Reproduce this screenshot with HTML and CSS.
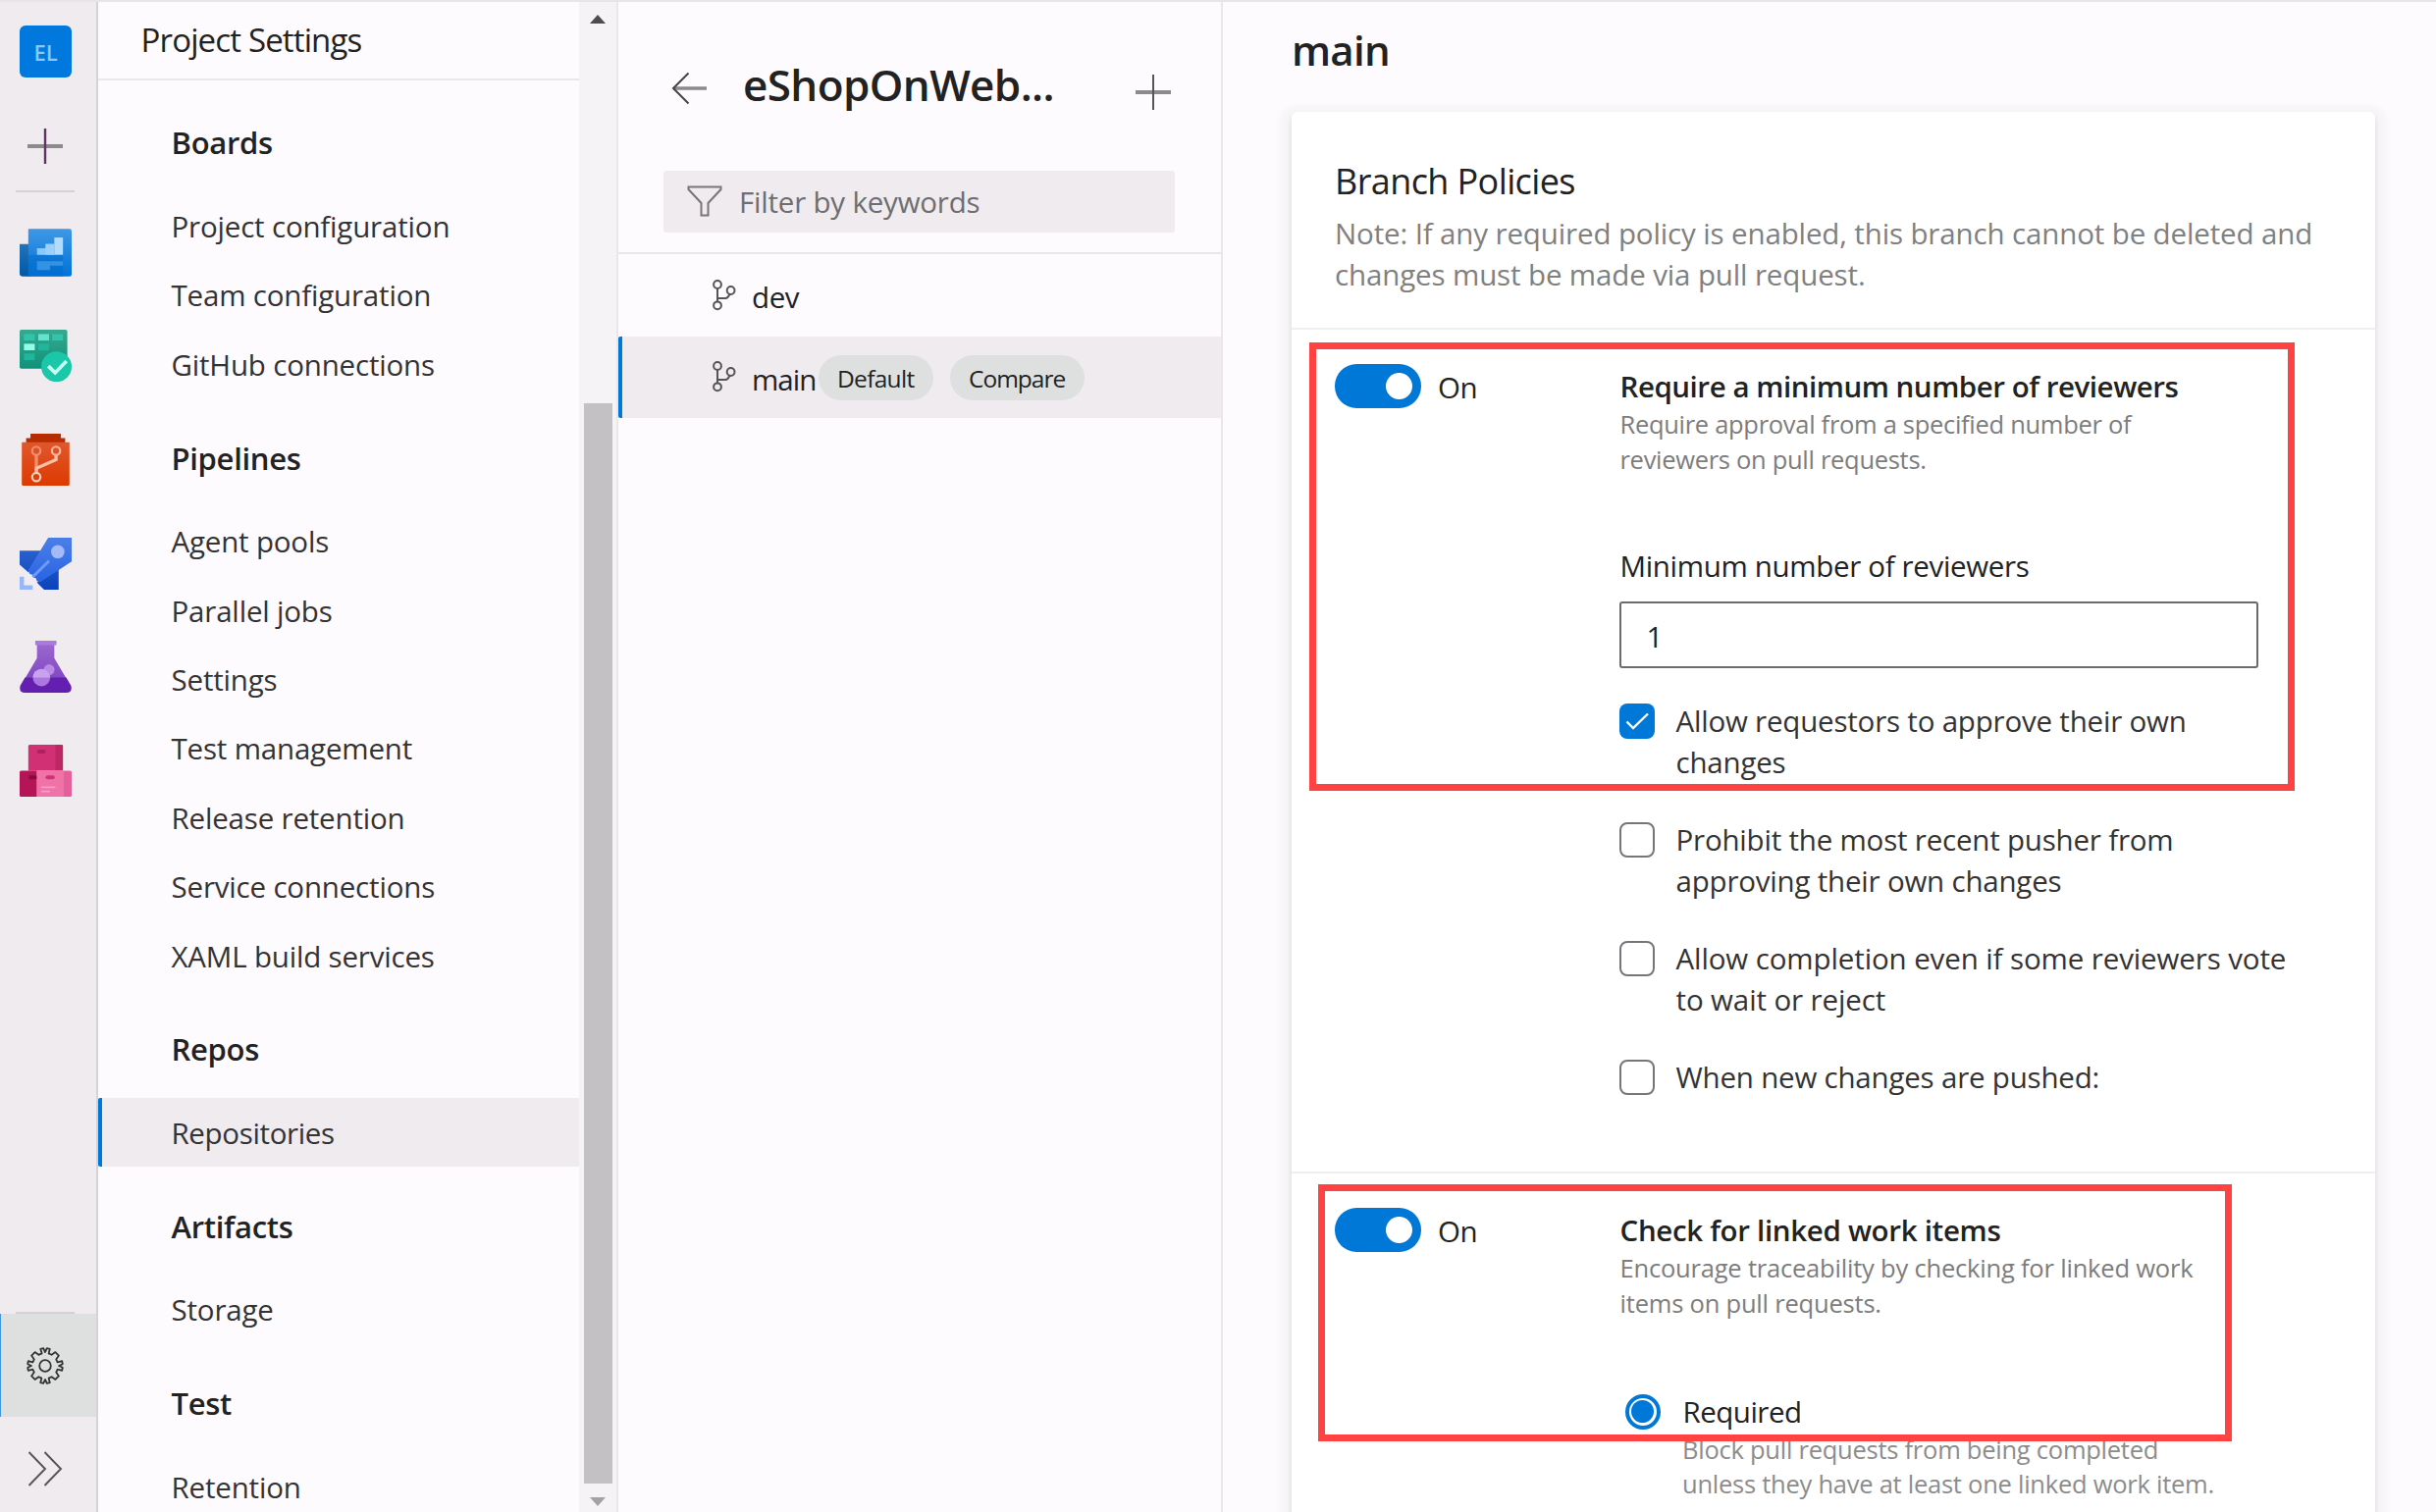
FILE: index.html
```html
<!DOCTYPE html>
<html lang="en">
<head>
<meta charset="utf-8">
<title>Project Settings - Repositories</title>
<link rel="stylesheet" href="styles.css">
</head>
<body>
<svg class="defs" width="0" height="0" aria-hidden="true">
  <defs>
    <linearGradient id="g-blue" x1="0" y1="0" x2="0" y2="1"><stop offset="0" stop-color="#3f98e6"/><stop offset="1" stop-color="#0072d8"/></linearGradient>
    <linearGradient id="g-navy" x1="0" y1="0" x2="0" y2="1"><stop offset="0" stop-color="#2373b8"/><stop offset="1" stop-color="#0058a5"/></linearGradient>
    <linearGradient id="g-green" x1="0" y1="0" x2="0" y2="1"><stop offset="0" stop-color="#37a98e"/><stop offset="1" stop-color="#0f927a"/></linearGradient>
    <linearGradient id="g-orange" x1="0" y1="0" x2="0" y2="1"><stop offset="0" stop-color="#e0572c"/><stop offset="1" stop-color="#dd3a00"/></linearGradient>
    <linearGradient id="g-rocket" x1="0" y1="0" x2="0" y2="1"><stop offset="0" stop-color="#4a7fe8"/><stop offset="1" stop-color="#2a63e4"/></linearGradient>
    <linearGradient id="g-fin" x1="0" y1="0" x2="0" y2="1"><stop offset="0" stop-color="#2a60cc"/><stop offset="1" stop-color="#0a43bc"/></linearGradient>
    <linearGradient id="g-flask" x1="0" y1="0" x2="0" y2="1"><stop offset="0" stop-color="#9d68d0"/><stop offset="1" stop-color="#8148c2"/></linearGradient>
    <symbol id="branch" viewBox="0 0 24 32">
      <g fill="none" stroke="#555" stroke-width="2">
        <circle cx="5" cy="5" r="3.9"/><circle cx="5" cy="26.3" r="3.9"/><circle cx="18.6" cy="11" r="3.9"/>
        <path d="M5 9v13.4M5 19h8.5q2.5-.5 4-4.3"/>
      </g>
    </symbol>
  </defs>
</svg>
<div class="app">
  <nav class="rail">
    <div class="rail-item"><span class="avatar">EL</span></div>
    <div class="rail-item rail-add"><svg width="38" height="38" viewBox="0 0 38 38"><path d="M1 19h36" stroke="#8d898c" stroke-width="4"/><path d="M19 1v36" stroke="#5e3560" stroke-width="2.4"/></svg></div>
    <div class="rail-sep"></div>
    <div class="rail-item"><svg class="hub" viewBox="0 0 24 24"><path fill="url(#g-navy)" d="M0 8h5v15H1.5Q0 23 0 21.5z"/><path fill="url(#g-blue)" d="M4 1h19q1 0 1 1v20q0 1-1 1H4z"/><path fill="#0068c8" opacity=".45" d="M4 13h16v10H4z"/><path fill="#8cc8f8" d="M8 10h4V8h4v5H8z"/><path fill="#b3dbfb" d="M16 5h4v8h-4z"/><path fill="#9cd0fa" d="M12 8h4v5h-4z"/><path fill="#3492e4" d="M8 16h12v2h-6v2H8z"/></svg></div>
    <div class="rail-item"><svg class="hub" viewBox="0 0 24 24"><rect width="22" height="18" rx=".8" fill="url(#g-green)"/><path fill="#32c4ab" d="M2 2h5v3H2zM15 2h5v3h-5z"/><path fill="#62e3cd" d="M8.6 2h5v3h-5z"/><path fill="#94ffe8" d="M2 6.5h5v3H2z"/><path fill="#21b69c" d="M8.6 6.5h5v3h-5zM2 11h5v3H2z"/><circle cx="17" cy="17.1" r="7" fill="#1bc7a9"/><path fill="none" stroke="#c4fff1" stroke-width="1.7" d="M13.2 16.8l3.2 3.1 5.2-5.4"/></svg></div>
    <div class="rail-item"><svg class="hub" viewBox="0 0 24 24"><path fill="#b72c00" d="M5 0h14v2h2v3H3V2h2z"/><path fill="url(#g-orange)" d="M1 4h22v19.300q0 .7-.7.7H1.700Q1 24 1 23.300z"/><g fill="none" stroke="#f9ab92"><circle cx="7.700" cy="7.900" r="1.900" stroke-width="1" stroke="#f08f70"/><path stroke="#f08f70" stroke-width="1.500" d="M7.700 10v7"/><path stroke="#ffc0a8" stroke-width="1.500" d="M16.800 10v2l-9.100 4v2"/><circle cx="16.800" cy="7.900" r="1.900" stroke="#ffb59d" stroke-width="1"/><circle cx="7.700" cy="20" r="1.900" stroke="#ffd0bf" stroke-width="1"/></g></svg></div>
    <div class="rail-item"><svg class="hub" viewBox="0 0 24 24"><path fill="url(#g-fin)" d="M0 6h10L4 16 0 12.500zM18 13v11h-6.700L8 20.700z"/><path fill="url(#g-rocket)" d="M13.200 0H24v11L9.500 20.500 8 20l-.5-1.300-1-.2-.3-1.300-1.500-.4-.8-1.600z"/><circle cx="17.600" cy="6.500" r="3.100" fill="#a2baf7"/><path stroke="#6d9bf8" stroke-width="1.300" d="M13.600 10.700l-7.600 7.400"/><path fill="#98b7fb" d="M0 18h2v4h4v2H0z"/></svg></div>
    <div class="rail-item"><svg class="hub" viewBox="0 0 24 24"><path fill="url(#g-flask)" d="M8 1h8v7l5.600 9.500H2.400L8 8z"/><path fill="#a97bdb" d="M7.200 0h9.800v2H7.200z"/><path fill="#6320b0" d="M2.500 17h19l2.200 3.700Q24.500 24 21.500 24h-19Q-.5 24 .3 20.700z"/><circle cx="13.600" cy="13.400" r="2.500" fill="#b78be6"/><circle cx="10.100" cy="17" r="4" fill="#ac78e0"/><path fill="#c7a2ef" d="M6.100 17a4 4 0 0 1 8 0z"/></svg></div>
    <div class="rail-item"><svg class="hub" viewBox="0 0 24 24"><path fill="#d13174" d="M4.500 0H17v12H4V.5z"/><path fill="#bc2864" d="M16.500 0h3q.5 0 .5.500V12h-3.500z"/><rect x="8" y="2.300" width="4" height="1.800" rx=".9" fill="#ae2260"/><path fill="#b31556" d="M.7 12H8v12H.7q-.7 0-.7-.7V12.700Q0 12 .7 12z"/><rect x="4.200" y="14.200" width="3.800" height="1.800" rx=".8" fill="#860c3e"/><path fill="#f073a8" d="M8 12h12v12H8z"/><path fill="#e75f9a" d="M20 12h3.300q.7 0 .7.700v10.600q0 .7-.7.700H20z"/><rect x="12" y="14.200" width="4.200" height="1.800" rx=".9" fill="#d03277"/><path stroke="#fa9cc4" stroke-width=".8" d="M10 19.600h6.500M10 21.600h4"/></svg></div>
    <div class="rail-sep rail-sep-end"></div>
    <div class="rail-item rail-active"><svg width="38" height="38" viewBox="-19 -19 38 38"><path fill="none" stroke="#333" stroke-width="1.800" stroke-linejoin="round" d="M-3.300-12.600L-4.800-17.200-1.800-17.800 0-14 1.800-17.800 4.800-17.200 3.600-12.600 6.600-11.200 10.400-13.900 13.900-10.400 11.200-6.600 12.600-3.600 17.200-4.800 17.800-1.800 14 0 17.800 1.800 17.200 4.800 12.600 3.600 11.200 6.600 13.900 10.400 10.400 13.900 6.600 11.200 3.600 12.600 4.800 17.200 1.800 17.800 0 14-1.800 17.800-4.800 17.200-3.600 12.600-6.600 11.200-10.400 13.900-13.900 10.400-11.200 6.600-12.600 3.600-17.200 4.800-17.800 1.800-14 0-17.800-1.800-17.200-4.800-12.600-3.600-11.200-6.600-13.900-10.400-10.400-13.900-6.600-11.200z"/><circle r="5.800" fill="none" stroke="#333" stroke-width="1.800"/></svg></div>
    <div class="rail-item"><svg width="36" height="38" viewBox="0 0 36 38"><path fill="none" stroke="#555" stroke-width="1.900" d="M1.500 2L18 19 1.500 36M17.500 2L34 19 17.500 36"/></svg></div>
  </nav>

  <aside class="settings">
    <div class="settings-body">
      <h1 class="settings-title">Project Settings</h1>
      <h2>Boards</h2>
      <ul><li>Project configuration</li><li>Team configuration</li><li>GitHub connections</li></ul>
      <h2>Pipelines</h2>
      <ul><li>Agent pools</li><li>Parallel jobs</li><li>Settings</li><li>Test management</li><li>Release retention</li><li>Service connections</li><li>XAML build services</li></ul>
      <h2>Repos</h2>
      <ul><li class="selected">Repositories</li></ul>
      <h2>Artifacts</h2>
      <ul><li>Storage</li></ul>
      <h2>Test</h2>
      <ul><li>Retention</li></ul>
    </div>
    <div class="scrollbar"><span class="arrow-up"></span><span class="thumb"></span><span class="arrow-down"></span></div>
  </aside>

  <section class="branches">
    <header class="repo-head">
      <svg class="back" width="36" height="34" viewBox="0 0 36 34"><path stroke="#8d898c" stroke-width="3.600" d="M2 17h34"/><path fill="none" stroke="#444" stroke-width="2" d="M17.500 1.500L2 17l15.500 15.500"/></svg>
      <h2>eShopOnWeb...</h2>
      <svg class="plus" width="36" height="36" viewBox="0 0 36 36"><path stroke="#8d898c" stroke-width="3.800" d="M0 18h36"/><path stroke="#555" stroke-width="2" d="M18 0v36"/></svg>
    </header>
    <div class="filter">
      <svg width="36" height="32" viewBox="0 0 36 32"><path fill="none" stroke="#7b7479" stroke-width="2" d="M1.500 1.500h33v2.500L21.500 18v12.500h-7V18L1.500 4z"/></svg>
      <span>Filter by keywords</span>
    </div>
    <div class="branch-list">
      <div class="branch"><svg><use href="#branch"/></svg><span class="name">dev</span></div>
      <div class="branch current"><svg><use href="#branch"/></svg><span class="name">main</span><span class="pill pill-default">Default</span><span class="pill pill-compare">Compare</span></div>
    </div>
  </section>

  <main class="content">
    <h2 class="content-title">main</h2>
    <div class="card">
      <header class="card-head">
        <h3>Branch Policies</h3>
        <p>Note: If any required policy is enabled, this branch cannot be deleted and<br>changes must be made via pull request.</p>
      </header>
      <section class="policy">
        <div class="switch"><span class="toggle"></span><span class="state">On</span></div>
        <div class="detail">
          <h4 class="title-wide">Require a minimum number of reviewers</h4>
          <p class="desc desc-tight">Require approval from a specified number of<br>reviewers on pull requests.</p>
          <label class="field-label">Minimum number of reviewers</label>
          <div class="input">1</div>
          <div class="options">
            <div class="option"><span class="check checked"><svg width="36" height="36" viewBox="0 0 36 36"><path fill="none" stroke="#fff" stroke-width="2.400" d="M7.500 18.500l6.500 6.500L29 10.500"/></svg></span><span>Allow requestors to approve their own<br>changes</span></div>
            <div class="option"><span class="check"></span><span>Prohibit the most recent pusher from<br>approving their own changes</span></div>
            <div class="option option-long"><span class="check"></span><span>Allow completion even if some reviewers vote<br>to wait or reject</span></div>
            <div class="option"><span class="check"></span><span>When new changes are pushed:</span></div>
          </div>
        </div>
      </section>
      <section class="policy">
        <div class="switch"><span class="toggle"></span><span class="state">On</span></div>
        <div class="detail">
          <h4>Check for linked work items</h4>
          <p class="desc">Encourage traceability by checking for linked work<br>items on pull requests.</p>
          <div class="radio-row"><span class="radio"></span><span>Required</span></div>
          <p class="desc radio-desc">Block pull requests from being completed<br>unless they have at least one linked work item.</p>
        </div>
      </section>
    </div>
  </main>
</div>
<div class="highlight highlight-reviewers"></div>
<div class="highlight highlight-items"></div>
</body>
</html>
```
FILE: styles.css
```css
* { box-sizing: border-box; }
body {
  margin: 0;
  position: relative;
  width: 2482px;
  height: 1541px;
  overflow: hidden;
  background: #fefbff;
  color: #222;
  font-family: "Open Sans", "Liberation Sans", sans-serif;
  font-size: 29.5px;
  letter-spacing: -0.1px;
  white-space: nowrap;
}
h1, h2, h3, h4, p, ul { margin: 0; padding: 0; font-weight: 400; }
ul { list-style: none; }
svg { display: block; flex: none; }
.defs { position: absolute; }

.app {
  display: flex;
  height: 1541px;
  overflow: hidden;
  border-top: 2px solid #e6e5e8;
}

/* Hub rail */
.rail {
  flex: none;
  width: 99.5px;
  height: 1548px;
  background: #efebee;
  border-right: 2px solid #d5d3d7;
  display: flex;
  flex-direction: column;
}
.rail-item {
  flex: none;
  height: 105.6px;
  padding-left: 20px;
  display: flex;
  align-items: center;
}
.rail-item:first-child { height: 101.5px; }
.avatar {
  width: 53px;
  height: 53px;
  border-radius: 6px;
  background: #0078de;
  color: #8ec6f5;
  font-size: 22px;
  font-weight: 600;
  line-height: 54px;
  text-align: center;
}
.rail-add { height: 90px; padding-left: 27px; }
.rail-sep { flex: none; width: 60px; height: 2px; margin: 0 0 9px 16px; background: #d4d2d5; }
.rail-sep-end { margin: auto 0 0 16px; }
.hub { width: 53px; height: 53px; }
.rail-active { background: #dee0df; border-left: 1px solid #3f98e0; padding-left: 26px; }
.rail-active + .rail-item { padding-left: 28px; }

/* Project settings list */
.settings { flex: none; width: 530.5px; display: flex; border-right: 2px solid #e8e7ea; }
.settings-body { flex: none; width: 490.5px; }
.settings-title {
  height: 79.5px;
  padding-left: 44px;
  border-bottom: 2px solid #e8e7ea;
  font-size: 33px;
  line-height: 77px;
  letter-spacing: -0.85px;
}
.settings h2 {
  height: 110px;
  padding: 40.5px 0 0 75px;
  font-size: 31px;
  font-weight: 600;
  line-height: 40px;
  letter-spacing: -0.3px;
}
.settings-title + h2 { height: 113.5px; padding-top: 43.5px; }
.settings li {
  height: 70.4px;
  padding-left: 75px;
  line-height: 72px;
  letter-spacing: -0.18px;
  color: #333;
}
.settings li.selected {
  background: #efebee;
  border-left: 4px solid #0078d7;
  border-radius: 2px 0 0 2px;
  padding-left: 71px;
  letter-spacing: -0.35px;
}
.scrollbar {
  width: 38px;
  background: #f6f3f6;
  display: flex;
  flex-direction: column;
  align-items: center;
  padding-top: 13px;
}
.arrow-up, .arrow-down { border: 8px solid transparent; border-top-width: 0; }
.arrow-up { border-bottom: 9px solid #4d4c4f; }
.arrow-down { border-top: 9px solid #a3a1a4; border-bottom-width: 0; margin-top: 13.5px; }
.thumb { width: 29px; height: 1101px; margin-top: 387px; background: #c3c1c4; }

/* Branch list */
.branches { flex: none; width: 615.5px; border-right: 2px solid #e8e7ea; }
.repo-head { display: flex; height: 171.5px; padding: 57px 51px 0 54px; }
.repo-head .back { margin-top: 13.5px; }
.repo-head h2 {
  flex: 1;
  margin-left: 37px;
  font-size: 44px;
  font-weight: 600;
  line-height: 54px;
  letter-spacing: -0.6px;
}
.repo-head .plus { margin-top: 17px; }
.filter {
  display: flex;
  align-items: center;
  gap: 17px;
  width: 521px;
  height: 63.5px;
  margin-left: 46px;
  padding-left: 24px;
  border-radius: 3px;
  background: #efebee;
  color: #6f6d70;
  line-height: 40px;
  letter-spacing: -0.2px;
}
.filter span { padding-top: 2px; }
.branch-list { margin-top: 20px; border-top: 2px solid #e8e7ea; }
.branch { display: flex; align-items: center; height: 83.5px; padding-left: 96px; }
.branch svg { width: 24px; height: 32px; }
.branch .name { margin-left: 16px; padding-top: 4px; letter-spacing: -0.4px; }
.branch.current {
  background: #efebee;
  border-left: 4px solid #0078d7;
  border-radius: 2px 0 0 2px;
  padding-left: 92px;
}
.branch.current .name { width: 68px; letter-spacing: -1px; }
.pill {
  height: 46px;
  margin-top: 2px;
  padding-left: 19px;
  border-radius: 23px;
  background: #dee0df;
  font-size: 24.5px;
  line-height: 47px;
  letter-spacing: -0.7px;
}
.pill-default { width: 117px; }
.pill-compare { width: 137px; margin-left: 17px; letter-spacing: -1px; }

/* Branch policies */
.content { padding-left: 70.5px; }
.content-title {
  height: 112px;
  padding-top: 19px;
  font-size: 42px;
  font-weight: 600;
  line-height: 60px;
  letter-spacing: -0.7px;
}
.card {
  width: 1104px;
  height: 1500px;
  border-radius: 6px;
  background: #fff;
  box-shadow: 0 4px 6px rgba(0, 0, 0, .13), 0 6px 4px 13px rgba(0, 0, 0, .022);
}
.card-head { height: 221.5px; padding: 48.5px 0 0 44px; border-bottom: 2px solid #efeef0; }
.card-head h3 { font-size: 36px; line-height: 44px; letter-spacing: -0.6px; }
.card-head p { margin-top: 10px; line-height: 42px; letter-spacing: -0.13px; color: #808080; }
.policy {
  display: flex;
  height: 860.2px;
  padding: 35.8px 0 0 44px;
  border-bottom: 2px solid #efeef0;
}
.switch { flex: none; display: flex; width: 290.5px; }
.toggle {
  width: 88px;
  height: 44.5px;
  border-radius: 22.25px;
  background: #0078d7;
  padding: 9px 9px 0 52px;
}
.toggle::after { content: ""; display: block; width: 27px; height: 27px; border-radius: 50%; background: #fff; }
.state { margin-left: 17px; height: 46px; line-height: 48px; letter-spacing: -0.4px; }
.detail h4 {
  margin-top: 2.5px;
  font-weight: 600;
  line-height: 40px;
  letter-spacing: -0.32px;
}
.detail .title-wide { letter-spacing: -0.46px; }
.desc {
  margin-top: 1.5px;
  font-size: 25.5px;
  line-height: 35.2px;
  letter-spacing: -0.2px;
  color: #7d7d7d;
}
.desc-tight { letter-spacing: -0.3px; }
.field-label { display: block; margin-top: 70.8px; line-height: 40px; letter-spacing: -0.33px; }
.input {
  width: 651px;
  height: 68px;
  margin: 16.5px 0 0 -1px;
  padding-left: 26px;
  border: 2px solid #6b6b6b;
  border-radius: 3px;
  line-height: 67px;
}
.options { display: grid; gap: 37px; margin: 32.5px 0 0 -1px; }
.option { display: flex; gap: 22px; line-height: 42px; letter-spacing: -0.2px; color: #333; }
.option-long { letter-spacing: -0.11px; }
.check {
  flex: none;
  width: 36px;
  height: 36px;
  margin-top: 3px;
  border: 2px solid #77757a;
  border-radius: 8px;
}
.check.checked { border: 0; background: #0078d7; }
.radio-row { display: flex; align-items: center; gap: 23px; height: 40px; margin: 72.8px 0 0 5px; letter-spacing: -0.5px; }
.radio {
  width: 36px;
  height: 36px;
  border: 4px solid #0078d7;
  border-radius: 50%;
  padding: 2.5px;
}
.radio::after { content: ""; display: block; height: 100%; border-radius: 50%; background: #0078d7; }
.radio-desc { margin: 1px 0 0 63.5px; letter-spacing: -0.25px; color: #8c8c8c; }

/* Callout frames over the policies */
.highlight { position: absolute; border: 7px solid #ff4343; }
.highlight-reviewers { left: 1334px; top: 349px; width: 1004px; height: 457px; }
.highlight-items { left: 1343px; top: 1207px; width: 931px; height: 262px; }
```
